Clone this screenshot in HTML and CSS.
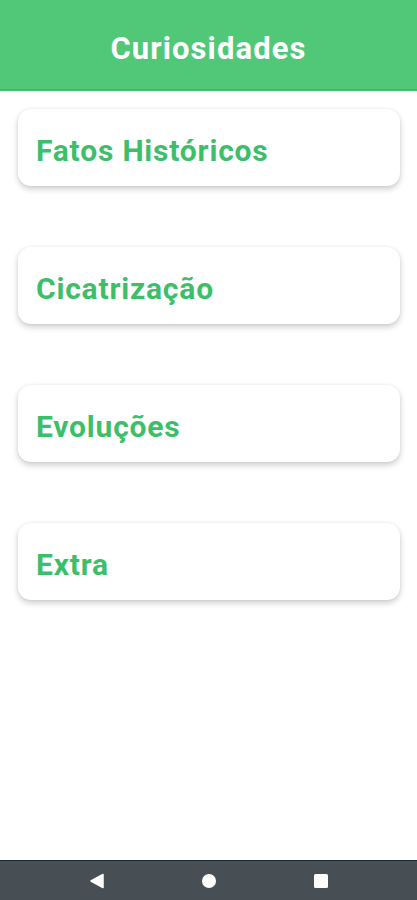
FILE: index.html
```html
<!DOCTYPE html>
<html lang="pt">
<head>
    <meta charset="UTF-8">
    <meta name="viewport" content="width=device-width, initial-scale=1.0">
    <title>Curiosidades</title>
    <link rel="stylesheet" href="styles.css">
</head>
<body>
<div class="screen">
    <header class="topbar">
        <h1>Curiosidades</h1>
    </header>

    <main class="list">
        <div class="card">Fatos Históricos</div>
        <div class="card">Cicatrização</div>
        <div class="card">Evoluções</div>
        <div class="card">Extra</div>
    </main>

    <nav class="navbar">
        <svg width="16" height="16" viewBox="0 0 16 16">
            <path d="M14 1.5 L2 8 L14 14.5 Z" fill="#fff" stroke="#fff" stroke-width="1.5" stroke-linejoin="round"/>
        </svg>
        <svg width="16" height="16" viewBox="0 0 16 16">
            <circle cx="8" cy="8" r="7" fill="#fff"/>
        </svg>
        <svg width="16" height="16" viewBox="0 0 16 16">
            <rect x="1" y="1" width="14" height="14" rx="1.5" fill="#fff"/>
        </svg>
    </nav>
</div>
</body>
</html>
```

FILE: styles.css
```css
body {
    margin: 0;
    padding: 0;
    font-family: Roboto, "Liberation Sans", sans-serif;
    background-color: #fff;
}

.screen {
    display: flex;
    flex-direction: column;
    height: 900px;
}

.topbar {
    height: 89px;
    background-color: #50c878;
    border-bottom: 2px solid #3fbf67;
    display: flex;
    justify-content: center;
    align-items: center;
}

.topbar h1 {
    margin: 0;
    color: #fff;
    font-size: 31px;
    font-weight: 700;
    letter-spacing: 1.1px;
    padding-top: 8px;
}

.list {
    flex: 1;
    display: flex;
    flex-direction: column;
    gap: 61px;
    padding: 18px 17px 0 18px;
}

.card {
    height: 77px;
    background-color: #fff;
    border-radius: 13px;
    box-shadow: 0 3px 6px rgba(0, 0, 0, 0.2), 0 0 3px rgba(0, 0, 0, 0.06);
    display: flex;
    align-items: center;
    padding-left: 18px;
    padding-top: 6px;
    box-sizing: border-box;
    color: #3dbf6a;
    font-size: 30px;
    font-weight: 700;
    letter-spacing: 0.8px;
}

.navbar {
    height: 39px;
    background-color: #474f55;
    border-top: 1px solid #1d2930;
    display: flex;
    align-items: center;
    justify-content: center;
    gap: 96px;
}
```
